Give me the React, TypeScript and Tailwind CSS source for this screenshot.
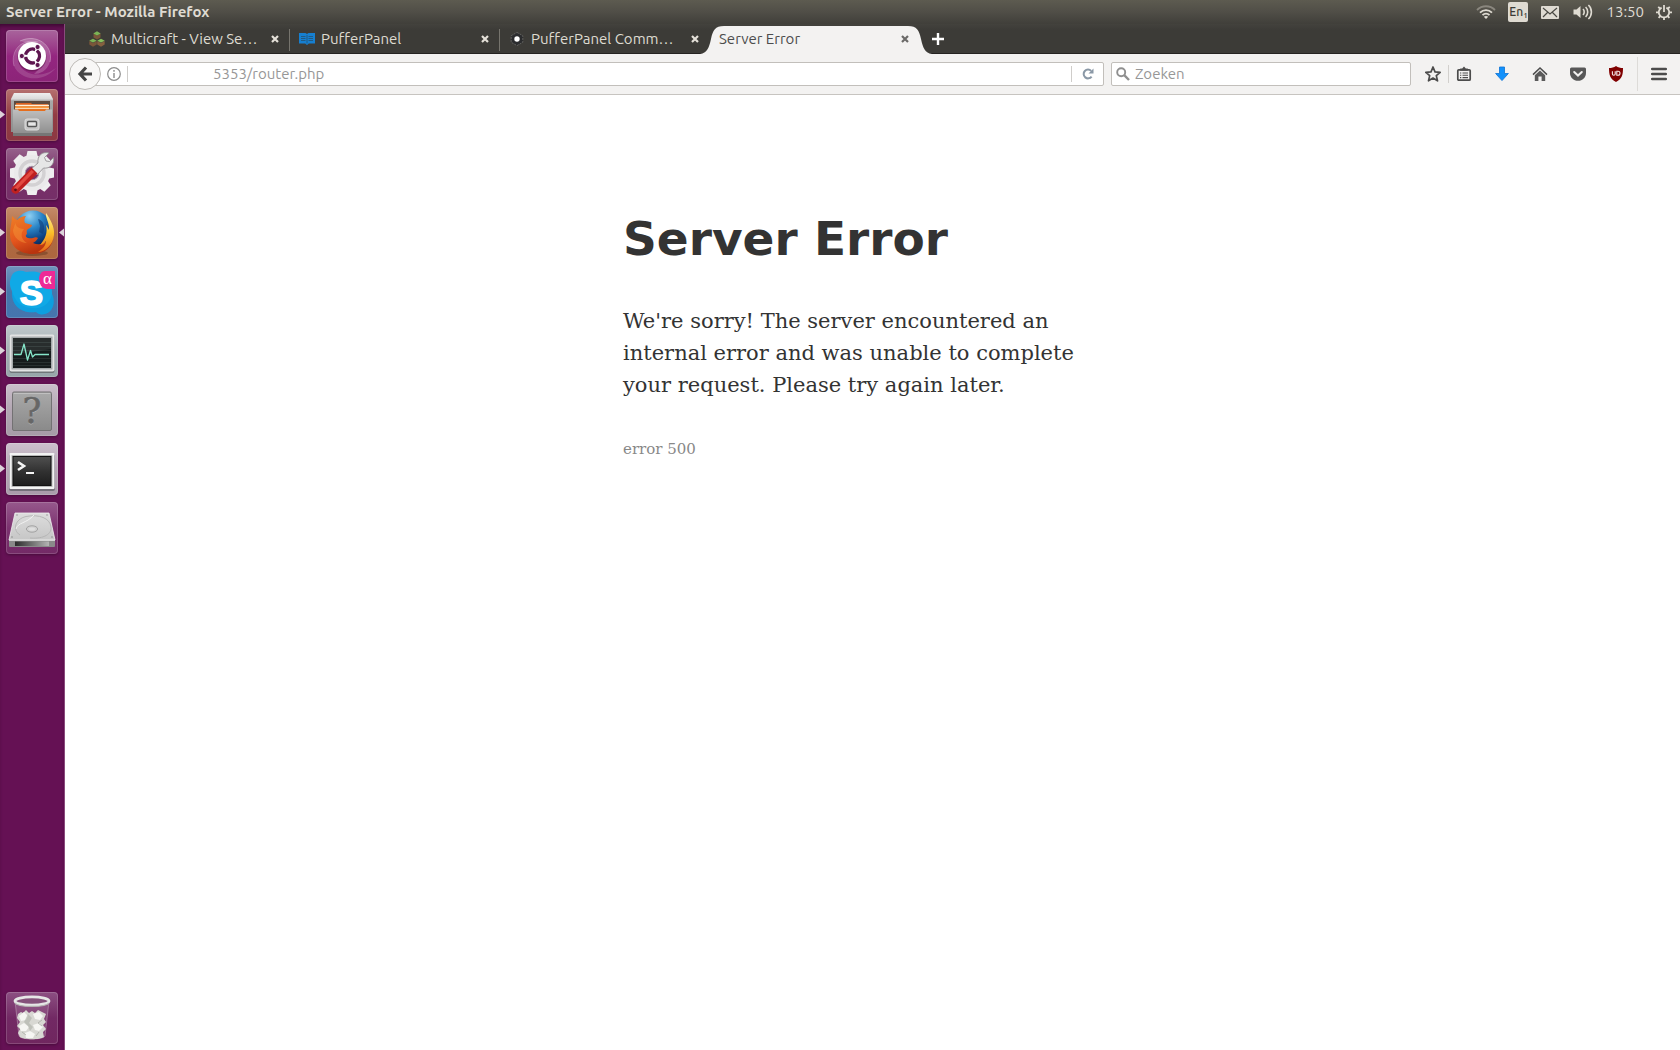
import React from 'react';

/* ---------- Launcher icons (52x52 canvas) ---------- */

function UbuntuIcon() {
  return (
    <svg viewBox="0 0 52 52" className="w-full h-full">
      <path d="M14 11 C30 3 48 15 44 32 C41 41 34 44 28 44 C39 36 38 16 14 11Z" fill="#fff" fillOpacity="0.2" />
      <path d="M8 36 C4 20 16 8 32 12 C18 12 11 20 13 33 C16 44 34 50 50 38 C36 54 14 50 8 36Z" fill="#fff" fillOpacity="0.14" />
      <path d="M14 11 C30 3 48 15 44 32" fill="none" stroke="#ffffff" strokeOpacity="0.3" />
      <path d="M8 36 C4 20 16 8 32 12" fill="none" stroke="#ffffff" strokeOpacity="0.22" />
      <circle cx="26" cy="27" r="14.5" fill="#5a1148" fillOpacity="0.5" />
      <circle cx="26" cy="26" r="14" fill="#ffffff" />
      <circle cx="26.5" cy="26" r="7" fill="none" stroke="#5e1650" strokeWidth="3.4" strokeDasharray="12.6 2.06" strokeDashoffset="-1" transform="rotate(-60 26.5 26)" />
      <g fill="#5e1650" stroke="#ffffff" strokeWidth="0.9">
        <circle cx="15.8" cy="26" r="2.6" />
        <circle cx="31.6" cy="17" r="2.6" />
        <circle cx="31.6" cy="35" r="2.6" />
      </g>
    </svg>
  );
}

function FilesIcon() {
  return (
    <svg viewBox="0 0 52 52" className="w-full h-full">
      <defs>
        <linearGradient id="cabTop" x1="0" y1="0" x2="0" y2="1">
          <stop offset="0" stopColor="#efefef" />
          <stop offset="0.15" stopColor="#dadada" />
          <stop offset="0.2" stopColor="#a9a9a9" />
          <stop offset="1" stopColor="#8d8d8d" />
        </linearGradient>
        <linearGradient id="cabFront" x1="0" y1="0" x2="0" y2="1">
          <stop offset="0" stopColor="#bfbfbf" />
          <stop offset="1" stopColor="#8a8a8a" />
        </linearGradient>
      </defs>
      <path d="M8 4 H44 L47 10 V43 H5 V10 Z" fill="url(#cabTop)" />
      <path d="M8 12 H44 V23 H8Z" fill="#5d4a3f" />
      <path d="M10 14 H25 L26 15 H42 V22 H10Z" fill="#d9601f" />
      <path d="M9 16.5 H43" stroke="#fdf0d8" strokeWidth="1.4" />
      <path d="M9 18.2 H43" stroke="#f79a3e" strokeWidth="1.6" />
      <path d="M9 19.6 H43" stroke="#fbe3c0" strokeWidth="1" />
      <path d="M9 21 H43" stroke="#e8731f" strokeWidth="1.6" />
      <path d="M7 20.5 H12 L13 22 H39 L40 20.5 H46 V46 Q46 47 45 47 H8 Q7 47 7 46Z" fill="url(#cabFront)" />
      <path d="M7 44 H46 V46 Q46 47 45 47 H8 Q7 47 7 46Z" fill="#767676" />
      <rect x="19" y="30" width="14" height="11" rx="2" fill="#c6c6c6" stroke="#dcdcdc" />
      <rect x="21.5" y="32.5" width="9" height="5" rx="1" fill="#e6e6e6" stroke="#555555" strokeWidth="1.4" />
    </svg>
  );
}

function SettingsIcon() {
  const teeth = [0, 45, 90, 135, 180, 225, 270, 315];
  return (
    <svg viewBox="0 0 52 52" className="w-full h-full">
      <g fill="#efeeef">
        {teeth.map((a) => (
          <path key={a} d="M20 10 L21.5 3 H30.5 L32 10Z" transform={`rotate(${a} 26 25)`} />
        ))}
      </g>
      <circle cx="26" cy="25" r="12.5" fill="none" stroke="#ebeaeb" strokeWidth="11" />
      <circle cx="26" cy="25" r="12" fill="none" stroke="#d3d1d3" strokeWidth="3.4" />
      <circle cx="26" cy="25" r="6.8" fill="none" stroke="#b2adb2" strokeWidth="0.8" />
      <path d="M25 21 L32 15 C31 8 36 3 43 5 L38.5 9.5 L40 13 L43.5 13.5 L47.5 9.5 C49 16 44 21 37.5 20 L31 27Z" fill="#e6e6e6" stroke="#8d8a8d" strokeWidth="0.8" />
      <path d="M6.5 39 L25.5 19.5 L31.5 25.5 L12.5 44.5 C8.5 48 3 43 6.5 39Z" fill="#c02020" />
      <path d="M8 40 L25.5 22 L28 24 L10 42.5Z" fill="#e24a41" />
      <circle cx="9.5" cy="41.8" r="1.4" fill="#5b0f1b" />
    </svg>
  );
}

function FirefoxIcon() {
  return (
    <svg viewBox="0 0 52 52" className="w-full h-full">
      <defs>
        <radialGradient id="ffGlobe" cx="0.4" cy="0.15" r="0.85">
          <stop offset="0" stopColor="#8fd0f2" />
          <stop offset="0.4" stopColor="#2b86c8" />
          <stop offset="0.75" stopColor="#0f4688" />
          <stop offset="1" stopColor="#0a2350" />
        </radialGradient>
        <linearGradient id="ffFox" x1="0" y1="0" x2="0.4" y2="1">
          <stop offset="0" stopColor="#ee7f27" />
          <stop offset="0.6" stopColor="#e4561d" />
          <stop offset="1" stopColor="#b9340f" />
        </linearGradient>
        <linearGradient id="ffTail" x1="0" y1="0" x2="0" y2="1">
          <stop offset="0" stopColor="#fff29a" />
          <stop offset="0.5" stopColor="#fbc02a" />
          <stop offset="1" stopColor="#e8691a" />
        </linearGradient>
      </defs>
      <ellipse cx="26" cy="46" rx="16" ry="3" fill="#6b3a20" fillOpacity="0.5" />
      <circle cx="27" cy="22" r="18.5" fill="url(#ffGlobe)" />
      <path d="M32 12 C37 13 40 19 37 27 L33 25 L34 19Z" fill="#0d3b78" fillOpacity="0.6" />
      <path d="M6 9 C8 11 9 12 11 13 C14 10 17 9 20 9 C18 12 18 14 19 16 C21 17 24 17 26 18 C26 20 22 22 21 23 C20 25 22 27 20 28 C19 30 22 32 27 31 C29 30 31 30 32 31 C31 33 29 35 27 36 C34 39 41 36 43 31 C45 28 46 24 45 19 C51 30 46 47 27 47 C12 47 4 38 4 27 C4 20 6 15 6 9Z" fill="url(#ffFox)" />
      <path d="M10 14 C8 18 12 22 18 22 C14 26 15 33 21 36 C14 36 7 30 7 23Z" fill="#f7a13b" fillOpacity="0.4" />
      <path d="M40 6 C44 12 49 20 48 28 C47 38 39 45 32 45 C37 42 40 38 40 34 C38 37 36 38 34 38 C39 32 42 26 40 18 C41 19 42 21 43 23 C44 17 39 10 40 6Z" fill="url(#ffTail)" />
    </svg>
  );
}

function SkypeIcon() {
  return (
    <svg viewBox="0 0 52 52" className="w-full h-full">
      <path d="M5 12 C6 5 14 3 20 6 C34 3 47 11 46 28 C50 36 47 46 39 48 C35 49 32 48 30 46 C16 48 5 40 6 25 C4 21 3 16 5 12Z" fill="#10a9e6" />
      <path d="M6 25 C5 40 16 48 30 46 C32 48 35 49 39 48 C47 46 50 36 46 28 C44 38 36 43 27 42 C16 42 9 36 6 25Z" fill="#0887cf" fillOpacity="0.3" />
      <text x="25.5" y="38.5" textAnchor="middle" fill="#ffffff" stroke="#ffffff" strokeWidth="1.6" fontFamily="Liberation Sans" fontWeight="bold" fontSize="35">S</text>
      <path d="M39 5 H49 V23 H41 Q33 22 33 12 Q34 5 39 5Z" fill="#ee2a96" />
      <text x="41.5" y="18" textAnchor="middle" fill="#ffffff" fontFamily="Liberation Serif" fontSize="17">α</text>
    </svg>
  );
}

function MonitorIcon() {
  return (
    <svg viewBox="0 0 52 52" className="w-full h-full">
      <rect x="3.5" y="10" width="45" height="38" rx="2" fill="#707679" />
      <rect x="3.5" y="9.5" width="45" height="37" rx="2" fill="#e2e3e3" />
      <rect x="5.5" y="11.5" width="41" height="33" fill="#a5aaab" />
      <rect x="7" y="13" width="38" height="30" fill="#161c1c" />
      <path d="M7 17.5 H45 M7 21.5 H45 M7 25.5 H45 M7 33.5 H45 M7 37.5 H45 M7 40.5 H45" stroke="#283130" strokeWidth="1" />
      <path d="M7 13 H45 V24 L7 30Z" fill="#ffffff" fillOpacity="0.08" />
      <path d="M8 29.5 H15 L18 19 L21.5 35 L24.5 25.5 L26.5 32 L29 29.5 H43" fill="none" stroke="#86e6c9" strokeWidth="1.3" strokeLinejoin="round" />
    </svg>
  );
}

function UnknownIcon() {
  return (
    <svg viewBox="0 0 52 52" className="w-full h-full">
      <defs>
        <linearGradient id="unk" x1="0" y1="0" x2="0" y2="1">
          <stop offset="0" stopColor="#a9a9a9" />
          <stop offset="1" stopColor="#8a8a8a" />
        </linearGradient>
      </defs>
      <rect x="6.5" y="8" width="39" height="38.5" rx="1.5" fill="url(#unk)" stroke="#737173" />
      <path d="M8 9.5 H44" stroke="#c0c0c0" />
      <text x="26" y="40" textAnchor="middle" fill="#b9b9b9" fontFamily="DejaVu Serif" fontSize="35">?</text>
      <text x="26" y="39" textAnchor="middle" fill="#666666" stroke="#666666" strokeWidth="0.6" fontFamily="DejaVu Serif" fontSize="35">?</text>
    </svg>
  );
}

function TerminalIcon() {
  return (
    <svg viewBox="0 0 52 52" className="w-full h-full">
      <defs>
        <linearGradient id="term" x1="0" y1="0" x2="0" y2="1">
          <stop offset="0" stopColor="#505050" />
          <stop offset="0.5" stopColor="#323232" />
          <stop offset="1" stopColor="#1d1d1d" />
        </linearGradient>
      </defs>
      <rect x="3" y="11" width="46" height="37" rx="2" fill="#75717a" />
      <rect x="3.5" y="10" width="45" height="36" rx="1" fill="#f3f3f3" />
      <rect x="5.5" y="12" width="41" height="32" fill="#b9b9b9" />
      <rect x="7" y="13.5" width="38" height="29" fill="url(#term)" stroke="#111111" />
      <path d="M12 19 L18 23 L12 27" fill="none" stroke="#f4f4f4" strokeWidth="2.6" />
      <rect x="20" y="29" width="8" height="2" fill="#f4f4f4" />
    </svg>
  );
}

function DriveIcon() {
  return (
    <svg viewBox="0 0 52 52" className="w-full h-full">
      <defs>
        <linearGradient id="drive" x1="0" y1="0" x2="0" y2="1">
          <stop offset="0" stopColor="#dddddd" />
          <stop offset="1" stopColor="#c6c6c6" />
        </linearGradient>
        <linearGradient id="driveFront" x1="0" y1="0" x2="1" y2="0">
          <stop offset="0" stopColor="#2c2c2c" />
          <stop offset="1" stopColor="#b4b4b4" />
        </linearGradient>
      </defs>
      <path d="M9 11 H43 L49 38 H3Z" fill="url(#drive)" stroke="#f0f0f0" strokeWidth="0.8" />
      <path d="M3 38 H49 V44 Q49 45 48 45 H4 Q3 45 3 44Z" fill="#8a8a8a" />
      <path d="M3 38.4 H49" stroke="#f2f2f2" strokeWidth="0.8" />
      <path d="M9 39.5 H43 V44 H9Z" fill="url(#driveFront)" />
      <path d="M14 33 C6 28 9 17 20 14.5 C33 12 44 16 45 25 C46 34 34 37 24 36" fill="none" stroke="#b2b2b2" strokeWidth="0.9" />
      <path d="M10 27 C12 20 20 22 28 13" fill="none" stroke="#f4f4f4" strokeWidth="0.9" />
      <ellipse cx="26" cy="27" rx="5.6" ry="3.2" fill="#d2d2d2" stroke="#969696" strokeWidth="0.8" />
      <ellipse cx="26" cy="27" rx="3" ry="1.5" fill="#dfdfdf" />
      <g fill="#8c8c8c">
        <circle cx="11" cy="13" r="0.7" />
        <circle cx="41" cy="13" r="0.7" />
        <circle cx="6" cy="35" r="0.8" />
        <circle cx="46" cy="35" r="0.8" />
      </g>
    </svg>
  );
}

function TrashIcon() {
  return (
    <svg viewBox="0 0 52 52" className="w-full h-full">
      <path d="M9 9 L13 44 C14 48 38 48 39 44 L43 9Z" fill="#ffffff" fillOpacity="0.12" />
      <path d="M9 9 L13 44 C14 48 38 48 39 44 L43 9" fill="none" stroke="#c9b5c5" strokeOpacity="0.45" />
      <path d="M12 22 L15 20 L17 21 L20 18 L23 21 L26 19 L29 21 L32 18 L36 20 L40 22 L38 27 L40 30 L37 33 L40 37 L37 40 L38 45 C34 48 18 48 14 45 L12 41 L14 37 L11 34 L14 30 L11 26Z" fill="#d8d8d3" />
      <g fill="#f6f6f3">
        <path d="M13 24 L18 20 L22 24 L20 28 L15 29Z" />
        <path d="M27 22 L33 20 L37 24 L34 28 L29 27Z" />
        <path d="M13 34 L18 31 L23 35 L20 39 L15 39Z" />
        <path d="M27 33 L33 31 L37 35 L33 39 L29 38Z" />
        <path d="M19 41 L24 39 L29 42 L27 46 L20 46Z" />
      </g>
      <path d="M22 22 L26 26 L23 31 L27 35 L24 39 L22 34 L18 30Z" fill="#aeb0a8" fillOpacity="0.6" />
      <path d="M36 28 L32 31 L36 34 M16 40 L20 43 M33 40 L30 44" fill="none" stroke="#a4a69e" strokeOpacity="0.7" />
      <ellipse cx="26" cy="9" rx="17" ry="4.2" fill="#85517b" stroke="#e6e6e6" strokeWidth="2.8" />
      <path d="M9 11 C12 15.5 40 15.5 43 11" fill="none" stroke="#b5b5b2" strokeWidth="1.2" />
    </svg>
  );
}

interface LauncherItem {
  name: string;
  tile: string;
  icon: React.ReactNode;
  running?: boolean;
  focused?: boolean;
}

const launcherItems: LauncherItem[] = [
  { name: 'Dash', tile: 'bg-linear-to-b from-[#a8649c] via-[#942680] to-[#8c2478]', icon: <UbuntuIcon /> },
  { name: 'Files', tile: 'bg-linear-to-b from-[#b5706f] via-[#923c44] to-[#8c3842]', icon: <FilesIcon />, running: true },
  { name: 'Settings', tile: 'bg-linear-to-b from-[#96628c] via-[#793068] to-[#752f68]', icon: <SettingsIcon /> },
  { name: 'Firefox', tile: 'bg-linear-to-b from-[#c58b69] via-[#ae6a42] to-[#ad673f]', icon: <FirefoxIcon />, running: true, focused: true },
  { name: 'Skype', tile: 'bg-linear-to-b from-[#7094bd] via-[#4876ab] to-[#4575ae]', icon: <SkypeIcon />, running: true },
  { name: 'System Monitor', tile: 'bg-linear-to-b from-[#c0c8cb] via-[#a4b0b4] to-[#97a5a9]', icon: <MonitorIcon />, running: true },
  { name: 'Unknown', tile: 'bg-linear-to-b from-[#cbbfcb] via-[#b3a7b3] to-[#a69ba7]', icon: <UnknownIcon />, running: true },
  { name: 'Terminal', tile: 'bg-linear-to-b from-[#cdc1cd] via-[#b6a8b6] to-[#a99caa]', icon: <TerminalIcon />, running: true },
  { name: 'Drive', tile: 'bg-linear-to-b from-[#96588c] via-[#7c3270] to-[#732a66]', icon: <DriveIcon /> },
];

function LauncherTile({ item }: { item: LauncherItem }) {
  return (
    <div className="relative px-[6px]">
      {item.running && (
        <svg viewBox="0 0 5 8" className="absolute left-0 top-[21px] w-[5px] h-[9px]">
          <path d="M0 0 L5 4 L0 8Z" fill="#dcd3da" />
        </svg>
      )}
      {item.focused && (
        <svg viewBox="0 0 5 8" className="absolute right-0 top-[21px] w-[5px] h-[9px]">
          <path d="M5 0 L0 4 L5 8Z" fill="#dcd3da" />
        </svg>
      )}
      <button
        aria-label={item.name}
        className={`block w-[52px] h-[52px] rounded-[4px] overflow-hidden shadow-[inset_0_0_0_1px_rgba(255,255,255,0.16),0_1px_3px_rgba(0,0,0,0.3)] ${item.tile}`}
      >
        {item.icon}
      </button>
    </div>
  );
}

/* ---------- Top panel ---------- */

function TopPanel() {
  return (
    <header className="flex items-center justify-between h-6 pl-[6px] pr-2 bg-linear-to-b from-[#5d5b50] via-[#504e47] to-[#403f3a] text-[#dfdbd2]">
      <h1 className="text-[15px] leading-[24px] font-bold">Server Error - Mozilla Firefox</h1>
      <div className="flex items-center h-6">
        <svg viewBox="0 0 20 16" className="w-5 h-4 mr-[12px]" fill="none" strokeWidth="1.8">
          <path d="M1 6 C6 1 14 1 19 6" stroke="#8a877e" />
          <path d="M4 8.6 C7.5 5.2 12.5 5.2 16 8.6" stroke="#dfdbd2" />
          <path d="M6.5 11.2 C8.6 9 11.4 9 13.5 11.2" stroke="#dfdbd2" />
          <path d="M7.8 12.8 L10 15 L12.2 12.8 C11 11.8 9 11.8 7.8 12.8Z" fill="#dfdbd2" stroke="none" />
        </svg>
        <span className="flex justify-center w-5 h-5 mr-[13px] rounded-[2px] bg-[#dfdbd2] text-[#3c3b37] text-[12px] leading-[20px] font-medium">
          En<sub className="text-[8px] leading-[28px] bottom-0">1</sub>
        </span>
        <svg viewBox="0 0 18 13" className="w-[18px] h-[13px] mr-[14px]">
          <rect width="18" height="13" rx="1" fill="#dfdbd2" />
          <path d="M2 2 L9 8 L16 2 M2 11 L6.5 6.5 M16 11 L11.5 6.5" fill="none" stroke="#4a4943" strokeWidth="1.2" />
        </svg>
        <svg viewBox="0 0 20 16" className="w-5 h-4 mr-[13px]">
          <path d="M0.5 5.5 H3.5 L7.5 2 V14 L3.5 10.5 H0.5Z" fill="#dfdbd2" />
          <g fill="none" stroke="#dfdbd2" strokeWidth="1.6">
            <path d="M10 5 C11.6 6.6 11.6 9.4 10 11" />
            <path d="M12.6 3 C15.4 5.6 15.4 10.4 12.6 13" />
            <path d="M15.4 1 C19.4 4.6 19.4 11.4 15.4 15" />
          </g>
        </svg>
        <time className="text-[15px] leading-[24px] mr-[12px]">13:50</time>
        <svg viewBox="0 0 16 16" className="w-4 h-4" fill="none" stroke="#dfdbd2">
          <path d="M5.6 3.6 A5.2 5.2 0 1 0 10.4 3.6" strokeWidth="1.8" />
          <path d="M8 1 V8" strokeWidth="1.8" />
          <path d="M0 8.4 H2.5 M13.5 8.4 H16 M8 13.5 V16 M2.2 2.8 L4 4.5 M13.8 2.8 L12 4.5 M2.6 13.8 L4.4 12 M13.4 13.8 L11.6 12" strokeWidth="1.8" />
        </svg>
      </div>
    </header>
  );
}

/* ---------- Browser tabs ---------- */

function CloseGlyph({ color }: { color: string }) {
  return (
    <svg viewBox="0 0 8 8" className="w-2 h-2">
      <path d="M1 1 L7 7 M7 1 L1 7" stroke={color} strokeWidth="2.2" />
    </svg>
  );
}

function MulticraftFavicon() {
  return (
    <svg viewBox="0 0 16 16" className="w-4 h-4 shrink-0">
      <path d="M4.5 2.5 L8 4.5 L11.5 2.5 V6.5 L8 8.5 L4.5 6.5Z" fill="#7a5639" />
      <path d="M8 0.2 L11.7 2.4 L8 4.4 L4.3 2.4Z" fill="#7cb455" />
      <path d="M0.3 10 L4 12 L7.8 10 V13.5 L4 15.8 L0.3 13.5Z" fill="#7a5639" />
      <path d="M4 7.8 L7.8 9.7 L4 11.6 L0.2 9.7Z" fill="#7cb455" />
      <path d="M8.2 10 L12 12 L15.7 10 V13.5 L12 15.8 L8.2 13.5Z" fill="#86603f" />
      <path d="M12 7.8 L15.8 9.7 L12 11.6 L8.2 9.7Z" fill="#88c05c" />
    </svg>
  );
}

function BookFavicon() {
  return (
    <svg viewBox="0 0 16 16" className="w-4 h-4 shrink-0">
      <path d="M0 2 H6.5 L8 3 L9.5 2 H16 V12.5 H9.8 L8 14 L6.2 12.5 H0Z" fill="#167fd0" />
      <path d="M2 5.5 H6.5 M2 7.5 H6.5 M2 9.5 H6.5 M9.5 5.5 H14 M9.5 7.5 H14 M9.5 9.5 H14 M8 4 V12.5" stroke="#23506f" strokeWidth="0.8" />
    </svg>
  );
}

function HexFavicon() {
  return (
    <svg viewBox="0 0 16 16" className="w-4 h-4 shrink-0">
      <path d="M8 1.4 L13.8 4.7 V11.3 L8 14.6 L2.2 11.3 V4.7Z" fill="#2b2c2e" stroke="#6b6b68" strokeWidth="0.8" strokeDasharray="2 1" />
      <circle cx="8" cy="8" r="2.7" fill="#ffffff" />
    </svg>
  );
}

const tabs = [
  { title: 'Multicraft - View Se…', icon: <MulticraftFavicon />, separator: true },
  { title: 'PufferPanel', icon: <BookFavicon />, separator: true },
  { title: 'PufferPanel Comm…', icon: <HexFavicon />, separator: false },
];

function TabStrip() {
  return (
    <div className="flex h-[30px] pl-[15px] bg-linear-to-b from-[#43423d] to-[#3c3b37] to-20% shadow-[inset_0_-1px_0_#252321]">
      {tabs.map((tab) => (
        <div key={tab.title} className="relative flex items-center w-[210px] pl-[9px] pr-[11px]">
          {tab.icon}
          <button className="flex-1 ml-[6px] text-left text-[15px] leading-[30px] text-[#dfdbd2] whitespace-nowrap overflow-hidden">
            {tab.title}
          </button>
          <button aria-label="Close tab">
            <CloseGlyph color="#e4e0d8" />
          </button>
          {tab.separator && <span className="absolute right-0 top-[5px] w-px h-[22px] bg-[#76746d]"></span>}
        </div>
      ))}

      {/* Active tab */}
      <div className="relative flex items-center w-[210px] pl-[9px] pr-[11px]">
        <div className="absolute -left-[10px] -right-[12px] top-[2px] bottom-0 flex">
          <svg viewBox="0 0 24 28" className="w-6 h-7">
            <path d="M0 28 C7 27 9 22 11 13 C13 4 15 0 24 0 V28Z" fill="#f3f2f1" />
          </svg>
          <div className="flex-1 bg-[#f3f2f1]"></div>
          <svg viewBox="0 0 24 28" className="w-6 h-7">
            <path d="M24 28 C17 27 15 22 13 13 C11 4 9 0 0 0 V28Z" fill="#f3f2f1" />
          </svg>
        </div>
        <button className="relative flex-1 text-left text-[15px] leading-[30px] text-[#4c4c4c]">Server Error</button>
        <button aria-label="Close tab" className="relative">
          <CloseGlyph color="#6b6a68" />
        </button>
      </div>

      <button aria-label="New tab" className="ml-[12px]">
        <svg viewBox="0 0 12 12" className="w-3 h-3">
          <path d="M6 0 V12 M0 6 H12" stroke="#ffffff" strokeWidth="2.4" />
        </svg>
      </button>
    </div>
  );
}

/* ---------- Browser toolbar ---------- */

function Toolbar() {
  return (
    <div className="flex items-center h-[41px] pl-1 pr-[13px] bg-[#f3f2f1] border-b border-[#c7c4c0]">
      <button
        aria-label="Back"
        className="relative z-10 flex items-center justify-center w-8 h-8 shrink-0 rounded-full bg-[#f8f7f6] border border-[#bdbab6]"
      >
        <svg viewBox="0 0 16 16" className="w-4 h-4">
          <path d="M9 1.5 L3 8 L9 14.5 M3.5 8 H15" fill="none" stroke="#454545" strokeWidth="3.2" />
        </svg>
      </button>

      <div className="flex items-center flex-1 h-6 -ml-[6px] pl-[11px] bg-white border border-[#c2bfbb] rounded-r-[2px]">
        <svg viewBox="0 0 14 14" className="w-[14px] h-[14px] shrink-0">
          <circle cx="7" cy="7" r="6.3" fill="none" stroke="#8c8c8c" strokeWidth="1.2" />
          <path d="M7 6 V11 M7 3 V4.8" stroke="#8c8c8c" strokeWidth="1.4" />
        </svg>
        <span className="w-px h-4 ml-[6px] bg-[#cfcdca]"></span>
        <input
          aria-label="Address"
          defaultValue="5353/router.php"
          className="flex-1 min-w-0 pl-[85px] text-[15px] leading-[22px] text-[#979797] bg-transparent outline-none"
        />
        <button aria-label="Reload" className="flex items-center justify-center w-8 h-4 border-l border-[#cfcdca]">
          <svg viewBox="0 0 12 12" className="w-3 h-3">
            <path d="M9.6 8.6 A4.4 4.4 0 1 1 9.2 2.9" fill="none" stroke="#8a98a6" strokeWidth="2" />
            <path d="M11.5 0.5 V5.5 H6.5Z" fill="#8a98a6" />
          </svg>
        </button>
      </div>

      <div className="flex items-center w-[300px] h-6 ml-[7px] pl-1 bg-white border border-[#c2bfbb] rounded-[2px]">
        <svg viewBox="0 0 14 14" className="w-[14px] h-[14px] shrink-0">
          <circle cx="5.2" cy="5.2" r="4" fill="none" stroke="#8f8f8f" strokeWidth="1.9" />
          <path d="M8.2 8.2 L13 13" stroke="#8f8f8f" strokeWidth="2.4" />
        </svg>
        <input
          aria-label="Search"
          placeholder="Zoeken"
          className="flex-1 min-w-0 pl-[5px] text-[15px] leading-[22px] placeholder:text-[#979797] bg-transparent outline-none"
        />
      </div>

      <div className="flex items-center">
        <button aria-label="Bookmark" className="ml-[14px]">
          <svg viewBox="0 0 16 16" className="w-4 h-4">
            <path d="M8 1 L10 5.9 L15.2 6.3 L11.3 9.6 L12.5 14.8 L8 12 L3.5 14.8 L4.7 9.6 L0.8 6.3 L6 5.9Z" fill="none" stroke="#4c4c4c" strokeWidth="1.7" strokeLinejoin="round" />
          </svg>
        </button>
        <span className="w-px h-[18px] ml-[7px] bg-[#d2d0cd]"></span>
        <button aria-label="Bookmarks list" className="ml-[7px]">
          <svg viewBox="0 0 16 16" className="w-4 h-4">
            <rect x="1.8" y="3.8" width="12.4" height="10.4" rx="1" fill="#f3f2f1" stroke="#4c4c4c" strokeWidth="1.7" />
            <path d="M4.2 4.8 V2.6 H6.2 L8 0.6 L9.8 2.6 H11.8 V4.8Z" fill="#4c4c4c" />
            <path d="M4 7 H5.3 M6.5 7 H12 M4 9.3 H5.3 M6.5 9.3 H12 M4 11.6 H5.3 M6.5 11.6 H12" stroke="#4c4c4c" strokeWidth="1.1" />
          </svg>
        </button>
        <button aria-label="Downloads" className="ml-[22px]">
          <svg viewBox="0 0 16 16" className="w-4 h-4">
            <path d="M5.5 1 H10.5 V7.5 H14.4 L8 14.6 L1.6 7.5 H5.5Z" fill="#1391fb" stroke="#0d72d4" strokeWidth="0.8" />
          </svg>
        </button>
        <button aria-label="Home" className="ml-[22px]">
          <svg viewBox="0 0 16 16" className="w-4 h-4">
            <path d="M1 8.6 L8 2 L15 8.6" fill="none" stroke="#4c4c4c" strokeWidth="1.5" />
            <path d="M8 4.4 L13.2 9.2 V15 H9.6 V10.4 H6.4 V15 H2.8 V9.2Z" fill="#5a5a5a" />
          </svg>
        </button>
        <button aria-label="Pocket" className="ml-[22px]">
          <svg viewBox="0 0 16 16" className="w-4 h-4">
            <path d="M1.5 1.5 H14.5 Q16 1.5 16 3 V7 C16 11.5 12.5 14.8 8 14.8 C3.5 14.8 0 11.5 0 7 V3 Q0 1.5 1.5 1.5Z" fill="#585858" />
            <path d="M4.2 6 L8 9.6 L11.8 6" fill="none" stroke="#f3f2f1" strokeWidth="2" strokeLinecap="round" />
          </svg>
        </button>
        <button aria-label="uBlock" className="ml-[22px]">
          <svg viewBox="0 0 16 16" className="w-4 h-4">
            <path d="M8 0 C10 1.6 12.5 2 15 2 C15 9 14 13 8 16 C2 13 1 9 1 2 C3.5 2 6 1.6 8 0Z" fill="#800000" />
            <path d="M4.4 5.2 V8 Q4.4 9.2 5.8 9.2 Q7.2 9.2 7.2 8 V5.2 M8.8 5.2 V9.2 H10 Q12 9.2 12 7.2 Q12 5.2 10 5.2Z" fill="none" stroke="#f5e8e8" strokeWidth="1.1" />
          </svg>
        </button>
        <span className="w-px h-[34px] ml-[13px] bg-[#dddbd8]"></span>
        <button aria-label="Menu" className="ml-[13px]">
          <svg viewBox="0 0 16 16" className="w-4 h-4">
            <path d="M1.2 3 H14.8 M1.2 8 H14.8 M1.2 13 H14.8" stroke="#4c4c4c" strokeWidth="2.6" strokeLinecap="round" />
          </svg>
        </button>
      </div>
    </div>
  );
}

export default function App() {
  return (
    <div className="flex flex-col min-h-screen bg-white font-['Ubuntu','Noto_Sans',sans-serif]">
      <TopPanel />

      <div className="flex flex-1">
        <aside className="flex flex-col justify-between w-[65px] shrink-0 pt-[6px] pb-[6px] bg-[#651154] border-r border-[#8a4a7d] shadow-[inset_0_4px_4px_-2px_rgba(30,0,25,0.6)]">
          <nav className="flex flex-col gap-[7px]">
            {launcherItems.map((item) => (
              <LauncherTile key={item.name} item={item} />
            ))}
          </nav>
          <LauncherTile
            item={{ name: 'Trash', tile: 'bg-linear-to-b from-[#8c4f82] via-[#722964] to-[#70265f]', icon: <TrashIcon /> }}
          />
        </aside>

        <div className="flex flex-col flex-1 min-w-0">
          <TabStrip />
          <Toolbar />

          {/* Error page */}
          <main className="w-full max-w-[499px] mx-auto pt-[114px] text-[#333333] font-['DejaVu_Serif',serif]">
            <h2 className="font-['DejaVu_Sans',sans-serif] font-bold text-[47px] leading-[60px]">Server Error</h2>
            <p className="mt-[36px] text-[21px] leading-[32px]">
              We're sorry! The server encountered an internal error and was unable to complete your request. Please try
              again later.
            </p>
            <p className="mt-[36px] text-[15px] leading-[24px] text-[#888888]">error 500</p>
          </main>
        </div>
      </div>
    </div>
  );
}
